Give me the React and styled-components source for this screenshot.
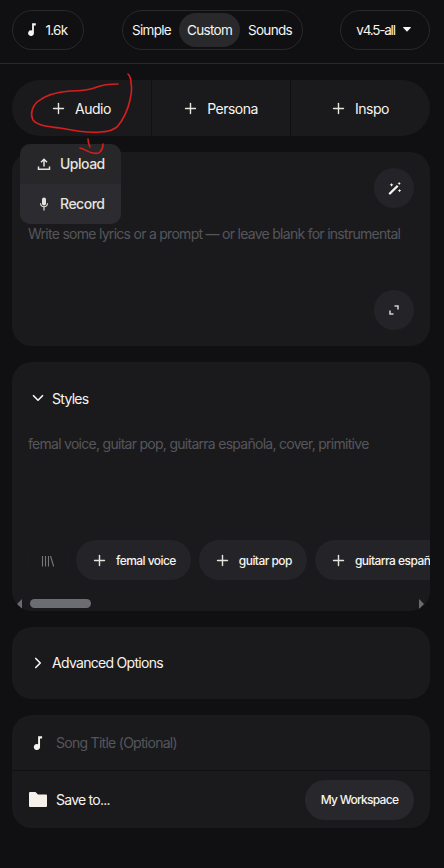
import React from "react";
import styled, { createGlobalStyle } from "styled-components";
import { Plus, ChevronDown, ChevronRight } from "lucide-react";

const GlobalStyle = createGlobalStyle`
  html, body {
    margin: 0;
    padding: 0;
    background-color: #101012;
  }

  * {
    box-sizing: border-box;
  }
`;

const Page = styled.div`
  position: relative;
  width: 444px;
  height: 868px;
  overflow: hidden;
  background-color: #101012;
  color: #f7f4ef;
  font-family: Inter, "Liberation Sans", sans-serif;
  font-size: 14px;
  letter-spacing: -0.5px;
`;

const Header = styled.div`
  display: flex;
  justify-content: space-between;
  align-items: center;
  height: 64px;
  padding: 0 14px 4px 12px;
  border-bottom: solid 1px #29292c;
`;

const Pill = styled.div`
  display: flex;
  align-items: center;
  justify-content: center;
  gap: ${(props) => props.$gap}px;
  width: ${(props) => props.$width}px;
  height: 40px;
  border: solid 1px #29292c;
  border-radius: 20px;
  font-size: 13.5px;
  letter-spacing: -0.7px;
`;

const Segment = styled.div`
  display: flex;
  align-items: center;
  justify-content: center;
  height: 34px;
  padding: ${(props) => (props.$active ? "0 8px" : "0")};
  border-radius: 17px;
  background-color: ${(props) => (props.$active ? "#29292c" : "transparent")};
`;

const ModelLabel = styled.span`
  margin-left: -3px;
  letter-spacing: -1.2px;
`;

const Content = styled.div`
  display: flex;
  flex-direction: column;
  gap: 16px;
  padding: 16px 14px 0 12px;
`;

const AddBar = styled.div`
  display: grid;
  grid-template-columns: 139px 139px 1fr;
  height: 56px;
  border-radius: 28px;
  background-color: #1a1a1d;
`;

const AddButton = styled.div`
  display: flex;
  align-items: center;
  justify-content: center;
  gap: 8px;
  padding-right: 2px;
  font-size: 14px;
  border-left: ${(props) => (props.$first ? "none" : "solid 1px #101012")};
`;

const Card = styled.div`
  display: flex;
  flex-direction: column;
  height: ${(props) => props.$height}px;
  border-radius: 20px;
  background-color: #1a1a1d;
  overflow: hidden;
`;

const LyricsBody = styled.div`
  display: flex;
  flex-direction: column;
  align-items: flex-end;
  height: 100%;
  padding: 16px;
`;

const RoundButton = styled.div`
  display: flex;
  align-items: center;
  justify-content: center;
  flex-shrink: 0;
  width: 40px;
  height: 40px;
  border-radius: 50%;
  background-color: #242428;
`;

const Placeholder = styled.div`
  margin: ${(props) => props.$margin || "0"};
  flex: ${(props) => (props.$grow ? 1 : "none")};
  width: ${(props) => (props.$grow ? "100%" : "auto")};
  color: #56565a;
  line-height: 20px;
  letter-spacing: -0.72px;
  white-space: nowrap;
`;

const SectionHead = styled.div`
  display: flex;
  align-items: center;
  gap: 5px;
  height: ${(props) => props.$height}px;
  padding-left: 17px;
  letter-spacing: -0.7px;
`;

const ChipRow = styled.div`
  display: flex;
  gap: 8px;
  margin-top: 86px;
  padding-left: 16px;
  overflow: hidden;
`;

const LibraryButton = styled.div`
  display: flex;
  align-items: center;
  justify-content: center;
  flex-shrink: 0;
  width: 40px;
  height: 40px;
  border-radius: 50%;
  border: solid 1px #1e1e21;
`;

const Chip = styled.div`
  display: flex;
  align-items: center;
  gap: 8px;
  flex-shrink: 0;
  height: 40px;
  padding: 0 15px 0 15px;
  border-radius: 20px;
  background-color: #242428;
  font-size: 12px;
  font-weight: 500;
  letter-spacing: -0.55px;
`;

const ScrollBar = styled.div`
  display: flex;
  align-items: center;
  justify-content: space-between;
  height: 15px;
  margin-top: 16px;
  padding: 0 6px 0 5px;
`;

const ScrollArrow = styled.div`
  width: 0;
  height: 0;
  border-top: solid 5px transparent;
  border-bottom: solid 5px transparent;
  border-right: ${(props) => (props.$right ? "none" : "solid 5px #6a6a6f")};
  border-left: ${(props) => (props.$right ? "solid 5px #6a6a6f" : "none")};
`;

const ScrollTrack = styled.div`
  flex: 1;
  padding: 0 8px;
`;

const ScrollThumb = styled.div`
  width: 61px;
  height: 9px;
  border-radius: 5px;
  background-color: #6c6c73;
`;

const TitleRow = styled.div`
  display: flex;
  align-items: center;
  gap: 13px;
  height: 56px;
  padding-left: 21px;
  border-bottom: solid 1px #101012;
`;

const SaveRow = styled.div`
  display: flex;
  align-items: center;
  justify-content: space-between;
  flex: 1;
  padding: 0 16px 0 17px;
`;

const SaveLabel = styled.div`
  display: flex;
  align-items: center;
  gap: 9px;
  letter-spacing: -0.75px;
`;

const WorkspaceButton = styled.div`
  display: flex;
  align-items: center;
  justify-content: center;
  width: 109px;
  height: 40px;
  border-radius: 20px;
  background-color: #28282c;
  font-size: 12px;
  font-weight: 500;
  letter-spacing: -0.72px;
`;

const Menu = styled.div`
  position: absolute;
  top: 144px;
  left: 20px;
  width: 101px;
  height: 80px;
  border-radius: 10px;
  overflow: hidden;
`;

const MenuItem = styled.div`
  display: flex;
  align-items: center;
  gap: 9px;
  height: 40px;
  padding: 0 0 1px 17px;
  background-color: ${(props) => (props.$hover ? "#2c2c30" : "#27272a")};
  color: #e6e3de;
  font-weight: 500;
`;

const Annotation = styled.svg`
  position: absolute;
  top: 0;
  left: 0;
  pointer-events: none;
`;

const NoteIcon = ({ width, height }) => (
  <svg width={width} height={height} viewBox="0 0 8 13" fill="#f7f4ef">
    <path d="M4.1 0.2H7.8V2.4H5.9V10.2A2.9 2.8 0 1 1 4.1 7.6z" />
  </svg>
);

const WandIcon = () => (
  <svg width="15" height="15" viewBox="0 0 16 16" fill="#f7f4ef">
    <path d="M10.6 4.2l1.7 1.7-8.6 8.6a.6.6 0 0 1-.9 0l-.9-.9a.6.6 0 0 1 0-.9z" />
    <path d="M4.8 2l.7 1.4 1.4.6-1.4.7-.7 1.4-.6-1.4L2.8 4l1.4-.6zM13 .8l.6 1.2 1.2.6-1.2.6-.6 1.2-.6-1.2-1.2-.6 1.2-.6zM13.4 8.4l.6 1.2 1.2.6-1.2.6-.6 1.2-.6-1.2-1.2-.6 1.2-.6z" />
  </svg>
);

const ExpandIcon = () => (
  <svg width="12" height="12" viewBox="0 0 12 12" fill="none" stroke="#cfcdc9" strokeWidth="1.6">
    <path d="M6.5 2h3.5v3.5M5.5 10H2V6.5" />
  </svg>
);

const UploadIcon = () => (
  <svg width="14" height="14" viewBox="0 0 14 14" fill="none" stroke="#e6e3de" strokeWidth="1.5">
    <path d="M1.5 9.5v2.7h11V9.5M7 9.5V2.5M4 5.2l3-3 3 3" />
  </svg>
);

const MicIcon = () => (
  <svg width="14" height="14" viewBox="0 0 14 14" fill="#e6e3de">
    <rect x="5" y="0.5" width="4" height="8" rx="2" />
    <path d="M3 6.3h1.1a2.9 2.9 0 0 0 5.8 0H11a4 4 0 0 1-3.4 3.9v3.2H6.4v-3.2A4 4 0 0 1 3 6.3z" />
  </svg>
);

const FolderIcon = () => (
  <svg width="18" height="16" viewBox="0 0 18 16" fill="#f5f1ea">
    <path d="M0 1a1 1 0 0 1 1-1h5.5l2.5 2.5H17a1 1 0 0 1 1 1V14a1 1 0 0 1-1 1H1a1 1 0 0 1-1-1z" />
  </svg>
);

const LibraryIcon = () => (
  <svg width="14" height="14" viewBox="0 0 14 14" fill="none" stroke="#77777b" strokeWidth="1.1">
    <path d="M1.5 3v10.5M4.5 3v10.5M7.5 3v10.5M9.5 3l3.2 10.5" />
  </svg>
);

const CaretIcon = () => (
  <svg width="8" height="5" viewBox="0 0 8 5" fill="#f7f4ef">
    <path d="M.6 0h6.8a.5.5 0 0 1 .4.8L4 4.8.2.8A.5.5 0 0 1 .6 0z" />
  </svg>
);

const tags = ["femal voice", "guitar pop", "guitarra española"];

function App() {
  return (
    <Page>
      <GlobalStyle />
      <Header>
        <Pill $width={72} $gap={9}>
          <NoteIcon width={8} height={13} />
          1.6k
        </Pill>
        <Pill $width={181} $gap={8}>
          <Segment>Simple</Segment>
          <Segment $active>Custom</Segment>
          <Segment>Sounds</Segment>
        </Pill>
        <Pill $width={90} $gap={8}>
          <ModelLabel>v4.5-all</ModelLabel>
          <CaretIcon />
        </Pill>
      </Header>

      <Content>
        <AddBar>
          <AddButton $first>
            <Plus size={17} color="#e6e3de" />
            Audio
          </AddButton>
          <AddButton>
            <Plus size={17} color="#e6e3de" />
            Persona
          </AddButton>
          <AddButton>
            <Plus size={17} color="#e6e3de" />
            Inspo
          </AddButton>
        </AddBar>

        <Card $height={194}>
          <LyricsBody>
            <RoundButton>
              <WandIcon />
            </RoundButton>
            <Placeholder $grow $margin="16px 0 0 0">
              Write some lyrics or a prompt — or leave blank for instrumental
            </Placeholder>
            <RoundButton>
              <ExpandIcon />
            </RoundButton>
          </LyricsBody>
        </Card>

        <Card $height={249}>
          <SectionHead $height={72}>
            <ChevronDown size={18} strokeWidth={2.2} />
            Styles
          </SectionHead>
          <Placeholder $margin="0 0 0 16px">
            femal voice, guitar pop, guitarra española, cover, primitive
          </Placeholder>
          <ChipRow>
            <LibraryButton>
              <LibraryIcon />
            </LibraryButton>
            {tags.map((tag) => (
              <Chip key={tag}>
                <Plus size={17} color="#e6e3de" />
                {tag}
              </Chip>
            ))}
          </ChipRow>
          <ScrollBar>
            <ScrollArrow />
            <ScrollTrack>
              <ScrollThumb />
            </ScrollTrack>
            <ScrollArrow $right />
          </ScrollBar>
        </Card>

        <Card $height={72}>
          <SectionHead $height={71}>
            <ChevronRight size={18} strokeWidth={2.2} />
            Advanced Options
          </SectionHead>
        </Card>

        <Card $height={113}>
          <TitleRow>
            <NoteIcon width={10} height={14} />
            <Placeholder>Song Title (Optional)</Placeholder>
          </TitleRow>
          <SaveRow>
            <SaveLabel>
              <FolderIcon />
              Save to...
            </SaveLabel>
            <WorkspaceButton>My Workspace</WorkspaceButton>
          </SaveRow>
        </Card>
      </Content>

      <Menu>
        <MenuItem>
          <UploadIcon />
          Upload
        </MenuItem>
        <MenuItem $hover>
          <MicIcon />
          Record
        </MenuItem>
      </Menu>

      <Annotation width="444" height="868" fill="none" stroke="#d81e1e" strokeWidth="1.6" strokeLinecap="round">
        <path d="M118 84C108 84 102 85 97 87C90 90 80 91 70 91C55 92 43 97 37 102C32 107 30 114 33 120C38 126 50 127 60 128C75 131 90 133 100 132C108 132 113 130 117 127C124 119 128 109 130 100C132 92 132 88 131 83C131 79 130 76 128 74" />
        <path d="M88 139C88 142 89 145 90 147M80 148C85 149 89 153 93 153C97 154 99 153 100 152C102 150 103 147 103 144" />
      </Annotation>
    </Page>
  );
}

export default App;
